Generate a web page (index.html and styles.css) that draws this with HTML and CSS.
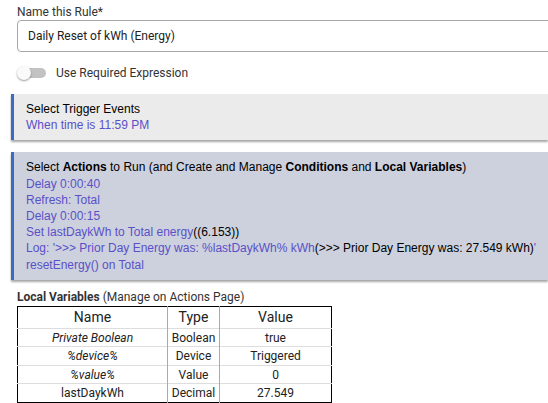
FILE: index.html
```html
<!DOCTYPE html>
<html lang="en">
<head>
    <meta charset="UTF-8">
    <title>Daily Reset of kWh (Energy)</title>
    <link rel="stylesheet" href="styles.css">
</head>
<body>
    <div class="page">
        <!-- Rule name -->
        <div class="field">
            <label class="field-label" for="rule-name">Name this Rule*</label>
            <input class="field-input" id="rule-name" type="text" value="Daily Reset of kWh (Energy)">
        </div>

        <div class="switch-row">
            <span class="switch"><span class="knob"></span></span>
            <span class="switch-text">Use Required Expression</span>
        </div>

        <!-- Triggers -->
        <div class="panel panel-trigger">
            <div class="panel-title">Select Trigger Events</div>
            <div class="item">When time is 11:59 PM</div>
        </div>

        <!-- Actions -->
        <div class="panel panel-actions">
            <div class="panel-title">Select <b>Actions</b> to Run (and Create and Manage <b>Conditions</b> and <b>Local Variables</b>)</div>
            <div class="item">Delay 0:00:40</div>
            <div class="item">Refresh: Total</div>
            <div class="item">Delay 0:00:15</div>
            <div class="item">Set lastDaykWh to Total energy<span class="plain">((6.153))</span></div>
            <div class="item">Log: '&gt;&gt;&gt; Prior Day Energy was: %lastDaykWh% kWh<span class="plain">(&gt;&gt;&gt; Prior Day Energy was: 27.549 kWh)</span>'</div>
            <div class="item">resetEnergy() on Total</div>
        </div>

        <!-- Local variables -->
        <div class="vars-title"><b>Local Variables</b> (Manage on Actions Page)</div>
        <table class="vars">
            <tr>
                <th class="col-name">Name</th>
                <th class="col-type">Type</th>
                <th class="col-value">Value</th>
            </tr>
            <tr>
                <td><i>Private Boolean</i></td>
                <td>Boolean</td>
                <td>true</td>
            </tr>
            <tr>
                <td><i>%device%</i></td>
                <td>Device</td>
                <td>Triggered</td>
            </tr>
            <tr>
                <td><i>%value%</i></td>
                <td>Value</td>
                <td>0</td>
            </tr>
            <tr>
                <td>lastDaykWh</td>
                <td>Decimal</td>
                <td>27.549</td>
            </tr>
        </table>
    </div>
</body>
</html>
```
FILE: styles.css
```css
body {
    margin: 0;
    padding: 0;
    background-color: #ffffff;
    font-family: Roboto, "Liberation Sans", Arial, sans-serif;
    color: #222222;
    overflow: hidden;
}

.page {
    padding: 4px 0 0 11px;
    width: 560px;
}

.field {
    padding-left: 6px;
}

.field-label {
    display: block;
    font-size: 12px;
    line-height: 16px;
    color: #333333;
}

.field-input {
    display: block;
    box-sizing: border-box;
    width: 560px;
    height: 32px;
    margin-top: 0;
    padding: 0 10px;
    border: 1px solid #a8a8a8;
    border-radius: 4px;
    font-family: Roboto, "Liberation Sans", Arial, sans-serif;
    font-size: 12px;
    color: #222222;
    background-color: #ffffff;
}

.switch-row {
    display: flex;
    align-items: center;
    margin: 14px 0 0 6px;
    height: 14px;
}

.switch {
    position: relative;
    display: inline-block;
    width: 26px;
    height: 10px;
    margin-left: 3px;
    border-radius: 5px;
    background-color: #c2c2c2;
}

.switch .knob {
    position: absolute;
    left: -3px;
    top: -2px;
    width: 14px;
    height: 14px;
    border-radius: 50%;
    background-color: #fafafa;
    box-shadow: 0 1px 2px rgba(0, 0, 0, 0.4);
}

.switch-text {
    margin-left: 10px;
    font-size: 12px;
    color: #333333;
}

.panel {
    box-sizing: border-box;
    width: 537px;
    border-left: 3px solid #3a6cc6;
    padding: 7px 10px 7px 12px;
    font-family: "Liberation Sans", Arial, sans-serif;
    font-size: 12px;
    line-height: 16.2px;
    color: #000000;
    box-shadow: 0 2px 2px rgba(0, 0, 0, 0.35);
}

.panel-trigger {
    margin-top: 14px;
    background-color: #ebebeb;
}

.panel-actions {
    margin-top: 12px;
    background-color: #cdd0dd;
}

.panel-title b {
    font-weight: bold;
}

.item {
    color: #5a50c8;
}

.item .plain {
    color: #000000;
}

.vars-title {
    margin: 10px 0 0 6px;
    font-size: 12px;
    line-height: 14px;
    color: #333333;
}

.vars {
    margin: 2px 0 0 6px;
    border-collapse: collapse;
    border: 1px solid #000000;
    font-size: 12px;
    color: #222222;
}

.vars th {
    font-weight: normal;
    font-size: 14px;
    height: 21px;
    padding: 0;
}

.vars td {
    height: 17.5px;
    padding: 0;
    text-align: center;
    border-top: 1px solid #dddddd;
}

.vars th + th, .vars td + td {
    border-left: 1px solid #aaaaaa;
}

.col-name {
    width: 149px;
}

.col-type {
    width: 51px;
}

.col-value {
    width: 111px;
}
```
